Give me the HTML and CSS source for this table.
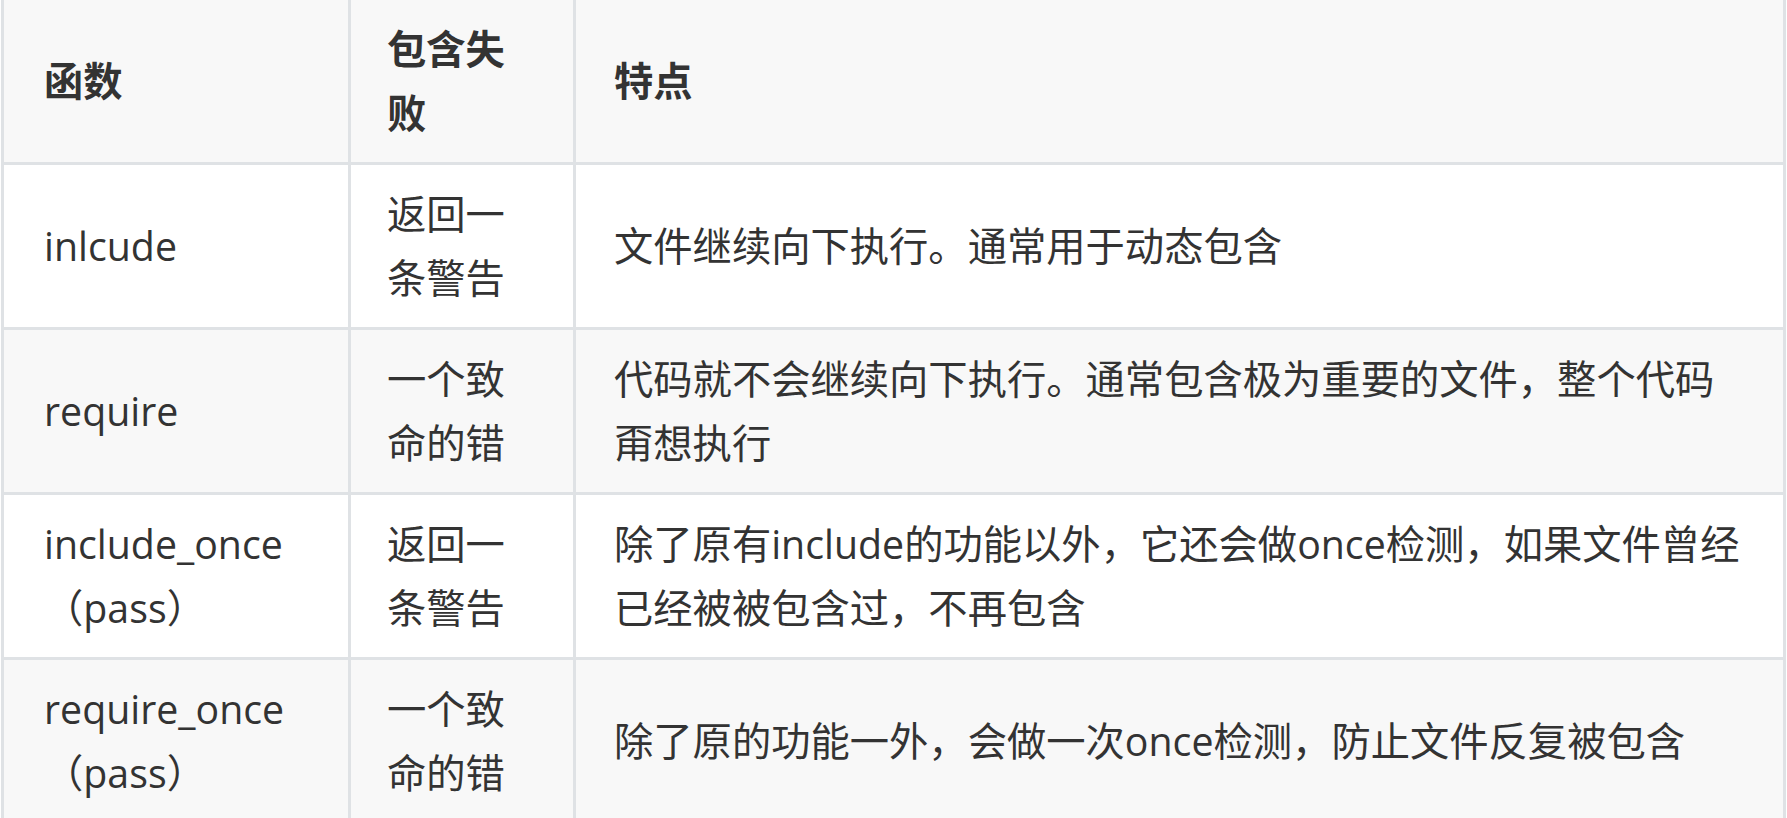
FILE: index.html
```html
<!DOCTYPE html>
<html lang="zh-CN">
<head>
<meta charset="utf-8">
<title>PHP 文件包含函数</title>
<link rel="stylesheet" href="styles.css">
</head>
<body>
<table class="fn-table">
  <colgroup>
    <col class="col-fn">
    <col class="col-fail">
    <col class="col-feature">
  </colgroup>
  <thead>
    <tr class="row-head">
      <th class="cell cell-first">函数</th>
      <th class="cell cell-second">包含失败</th>
      <th class="cell">特点</th>
    </tr>
  </thead>
  <tbody>
    <tr class="row-odd">
      <td class="cell cell-first">inlcude</td>
      <td class="cell cell-second">返回一条警告</td>
      <td class="cell">文件继续向下执行。通常用于动态包含</td>
    </tr>
    <tr class="row-even">
      <td class="cell cell-first">require</td>
      <td class="cell cell-second">一个致命的错</td>
      <td class="cell">代码就不会继续向下执行。通常包含极为重要的文件，整个代码<br>甭想执行</td>
    </tr>
    <tr class="row-odd">
      <td class="cell cell-first">include_once（pass）</td>
      <td class="cell cell-second">返回一条警告</td>
      <td class="cell">除了原有include的功能以外，它还会做once检测，如果文件曾经<br>已经被被包含过，不再包含</td>
    </tr>
    <tr class="row-even">
      <td class="cell cell-first">require_once（pass）</td>
      <td class="cell cell-second">一个致命的错</td>
      <td class="cell">除了原的功能一外，会做一次once检测，防止文件反复被包含</td>
    </tr>
  </tbody>
</table>
</body>
</html>
```

FILE: styles.css
```css
html, body {
  margin: 0;
  padding: 0;
  background: #ffffff;
}

body {
  padding-left: 1px;
  font-family: "Open Sans", "Noto Sans CJK SC", sans-serif;
  font-size: 39.3px;
  line-height: 64px;
  color: #333333;
  overflow: hidden;
}

.fn-table {
  border-collapse: separate;
  border-spacing: 0;
  table-layout: fixed;
  width: 1785px;
  border-left: 3px solid #dfe2e5;
}

.col-fn { width: 347px; }
.col-fail { width: 225px; }
.col-feature { width: 1210px; }

.cell {
  padding: 17px 36px 17px 38px;
  text-align: left;
  vertical-align: middle;
  border-right: 3px solid #dfe2e5;
  border-bottom: 3px solid #dfe2e5;
  word-break: break-all;
}

.cell-first {
  padding-left: 40px;
}

.cell-second {
  padding-left: 36px;
}

.row-head .cell {
  font-weight: 700;
  padding-top: 17px;
  padding-bottom: 17px;
  background: #f8f8f8;
}

.row-odd .cell {
  background: #ffffff;
}

.row-even .cell {
  background: #f8f8f8;
}
```
